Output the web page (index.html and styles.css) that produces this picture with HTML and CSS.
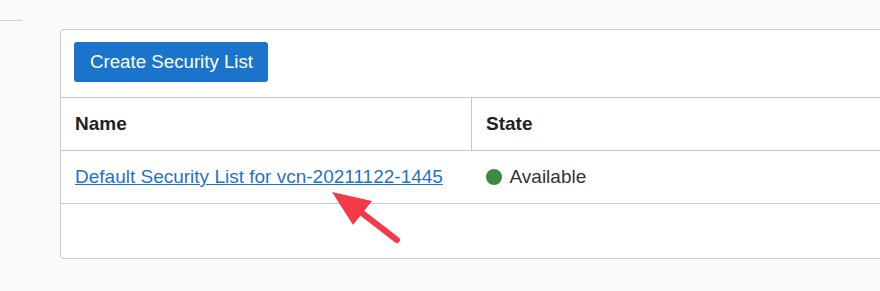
FILE: index.html
```html
<!DOCTYPE html>
<html lang="en">
<head>
    <meta charset="UTF-8">
    <title>Security Lists</title>
    <link rel="stylesheet" href="styles.css">
</head>
<body>

<div class="page">
    <div class="side-rule"></div>

    <div class="panel">
        <div class="toolbar">
            <button class="btn-primary">Create Security List</button>
        </div>

        <table class="list-table">
            <thead>
                <tr>
                    <th class="col-name">Name</th>
                    <th>State</th>
                </tr>
            </thead>
            <tbody>
                <tr>
                    <td class="col-name"><a href="#">Default Security List for vcn-20211122-1445</a></td>
                    <td><span class="status-dot"></span>Available</td>
                </tr>
                <tr class="empty-row">
                    <td class="col-name"></td>
                    <td></td>
                </tr>
            </tbody>
        </table>
    </div>

    <svg class="callout" viewBox="320 180 90 70" width="90" height="70">
        <line x1="362" y1="213" x2="397" y2="240" stroke="#f23a48" stroke-width="6" stroke-linecap="round"/>
        <polygon points="332,192 372,201 353,225" fill="#f23a48"/>
    </svg>
</div>

</body>
</html>
```

FILE: styles.css
```css
html, body {
    overflow: hidden;
}

body {
    margin: 0;
    background: #fafafa;
    font-family: "Liberation Sans", Arial, sans-serif;
    color: #222;
}

.page {
    position: relative;
    height: 291px;
}

.side-rule {
    width: 22px;
    height: 1px;
    background: #cfcfcf;
    position: relative;
    top: 20px;
}

.panel {
    margin: 28px -20px 0 60px;
    background: white;
    border: 1px solid #c6cad1;
    border-radius: 4px;
}

.toolbar {
    padding: 12px 13px 15px;
}

.btn-primary {
    display: block;
    height: 40px;
    padding: 0 15px 0 16px;
    background: #1b74cc;
    color: white;
    border: none;
    border-radius: 3px;
    font-family: inherit;
    font-size: 18.7px;
    cursor: pointer;
}

.list-table {
    width: 100%;
    border-collapse: collapse;
    font-size: 19px;
}

.list-table th,
.list-table td {
    height: 52px;
    padding: 0 14px;
    text-align: left;
    vertical-align: middle;
    border-top: 1px solid #c6cad1;
}

.list-table th {
    font-weight: bold;
    color: #222;
}

.list-table .col-name {
    width: 382px;
    border-right: 1px solid #c6cad1;
}

.list-table tbody .col-name {
    border-right: none;
}

.list-table td {
    color: #333;
}

.list-table a {
    color: #1f73c7;
    text-decoration: underline;
}

.empty-row td {
    height: 54px;
}

.status-dot {
    display: inline-block;
    width: 16px;
    height: 16px;
    border-radius: 50%;
    background: #3b8a3e;
    margin-right: 8px;
    vertical-align: -2px;
}

.callout {
    position: absolute;
    left: 320px;
    top: 180px;
    pointer-events: none;
}
```
